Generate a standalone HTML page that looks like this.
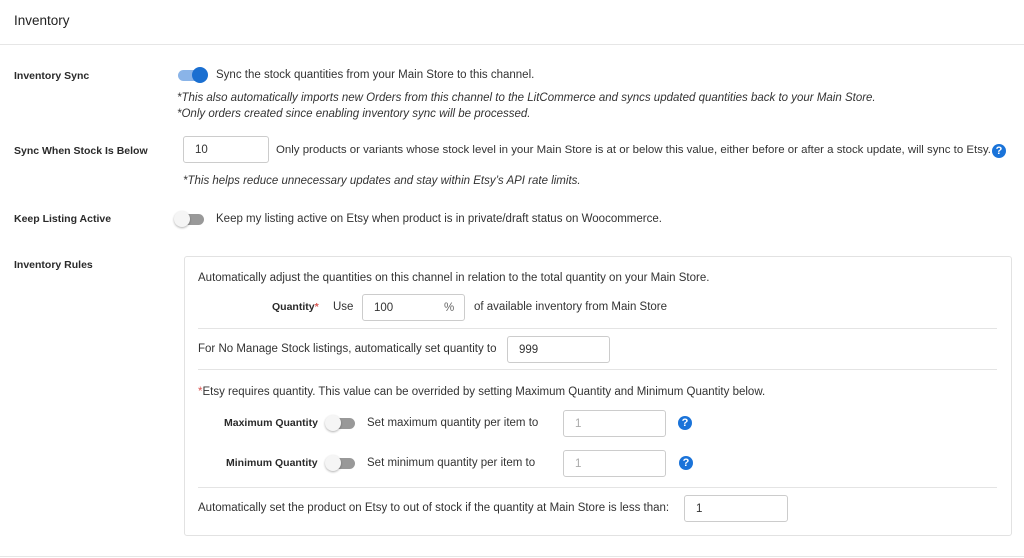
<!DOCTYPE html>
<html><head><meta charset="utf-8"><style>
*{margin:0;padding:0;box-sizing:border-box}
body{width:1024px;height:558px;background:#fff;font-family:"Liberation Sans",sans-serif;color:#333;font-size:11.5px;position:relative;overflow:hidden}
.a{position:absolute;white-space:nowrap;line-height:14px}
.lbl{font-weight:bold;font-size:10.5px;color:#2a2a2a}
.it{font-style:italic;font-size:11.5px;color:#333}
.inp{position:absolute;border:1px solid #ccc;border-radius:3px;background:#fff;font-size:11.5px;padding-left:11px;display:flex;align-items:center;color:#333}
.hr{position:absolute;height:1px;background:#e4e4e4}
.tog{position:absolute;width:32px;height:14px}
.tog .tr{position:absolute;left:2px;top:2px;width:28px;height:11px;border-radius:6px;background:#999}
.tog .kn{position:absolute;top:-1px;width:16px;height:16px;border-radius:50%;background:#f5f5f5;box-shadow:0 1px 2px rgba(0,0,0,.3)}
.help{position:absolute;width:14px;height:14px;border-radius:50%;background:#1a73d9;color:#fff;font-weight:bold;font-size:11px;text-align:center;line-height:14px}
.red{color:#d9534f}
</style></head><body>
<div class="a" style="left:14px;top:14px;font-size:13.5px;color:#222">Inventory</div>
<div class="hr" style="left:0;top:44px;width:1024px;background:#e6e6e6"></div>

<div class="a lbl" style="left:14px;top:69px">Inventory Sync</div>
<div class="tog" style="left:176px;top:68px"><div class="tr" style="background:#8ab4e8"></div><div class="kn" style="left:16px;background:#1a6fd1;box-shadow:none"></div></div>
<div class="a" style="left:216px;top:68px">Sync the stock quantities from your Main Store to this channel.</div>
<div class="a it" style="left:177px;top:91px">*This also automatically imports new Orders from this channel to the LitCommerce and syncs updated quantities back to your Main Store.</div>
<div class="a it" style="left:177px;top:107px">*Only orders created since enabling inventory sync will be processed.</div>

<div class="a lbl" style="left:14px;top:144px">Sync When Stock Is Below</div>
<div class="inp" style="left:183px;top:136px;width:86px;height:27px">10</div>
<div class="a" style="left:276px;top:143px;font-size:11.45px">Only products or variants whose stock level in your Main Store is at or below this value, either before or after a stock update, will sync to Etsy.</div>
<div class="help" style="left:992px;top:144px">?</div>
<div class="a it" style="left:183px;top:174px">*This helps reduce unnecessary updates and stay within Etsy’s API rate limits.</div>

<div class="a lbl" style="left:14px;top:212px">Keep Listing Active</div>
<div class="tog" style="left:174px;top:212px"><div class="tr"></div><div class="kn" style="left:0"></div></div>
<div class="a" style="left:216px;top:212px">Keep my listing active on Etsy when product is in private/draft status on Woocommerce.</div>

<div class="a lbl" style="left:14px;top:258px">Inventory Rules</div>
<div style="position:absolute;left:184px;top:256px;width:828px;height:280px;border:1px solid #e2e2e2;border-radius:3px"></div>
<div class="a" style="left:198px;top:271px">Automatically adjust the quantities on this channel in relation to the total quantity on your Main Store.</div>
<div class="a lbl" style="left:272px;top:300px">Quantity<span class="red">*</span></div>
<div class="a" style="left:333px;top:300px">Use</div>
<div class="inp" style="left:362px;top:294px;width:103px;height:27px">100<span style="position:absolute;left:81px;color:#666">%</span></div>
<div class="a" style="left:474px;top:300px">of available inventory from Main Store</div>
<div class="hr" style="left:198px;top:328px;width:799px"></div>
<div class="a" style="left:198px;top:342px">For No Manage Stock listings, automatically set quantity to</div>
<div class="inp" style="left:507px;top:336px;width:103px;height:27px">999</div>
<div class="hr" style="left:198px;top:369px;width:799px"></div>
<div class="a" style="left:198px;top:385px"><span class="red">*</span>Etsy requires quantity. This value can be overrided by setting Maximum Quantity and Minimum Quantity below.</div>

<div class="a lbl" style="left:224px;top:416px">Maximum Quantity</div>
<div class="tog" style="left:325px;top:416px"><div class="tr"></div><div class="kn" style="left:0"></div></div>
<div class="a" style="left:367px;top:416px">Set maximum quantity per item to</div>
<div class="inp" style="left:563px;top:410px;width:103px;height:27px;color:#aaa">1</div>
<div class="help" style="left:678px;top:416px">?</div>

<div class="a lbl" style="left:226px;top:456px">Minimum Quantity</div>
<div class="tog" style="left:325px;top:456px"><div class="tr"></div><div class="kn" style="left:0"></div></div>
<div class="a" style="left:367px;top:456px">Set minimum quantity per item to</div>
<div class="inp" style="left:563px;top:450px;width:103px;height:27px;color:#aaa">1</div>
<div class="help" style="left:679px;top:456px">?</div>

<div class="hr" style="left:198px;top:487px;width:799px"></div>
<div class="a" style="left:198px;top:501px">Automatically set the product on Etsy to out of stock if the quantity at Main Store is less than:</div>
<div class="inp" style="left:684px;top:495px;width:104px;height:27px">1</div>
<div class="hr" style="left:0;top:556px;width:1024px;background:#e6e6e6"></div>
</body></html>
